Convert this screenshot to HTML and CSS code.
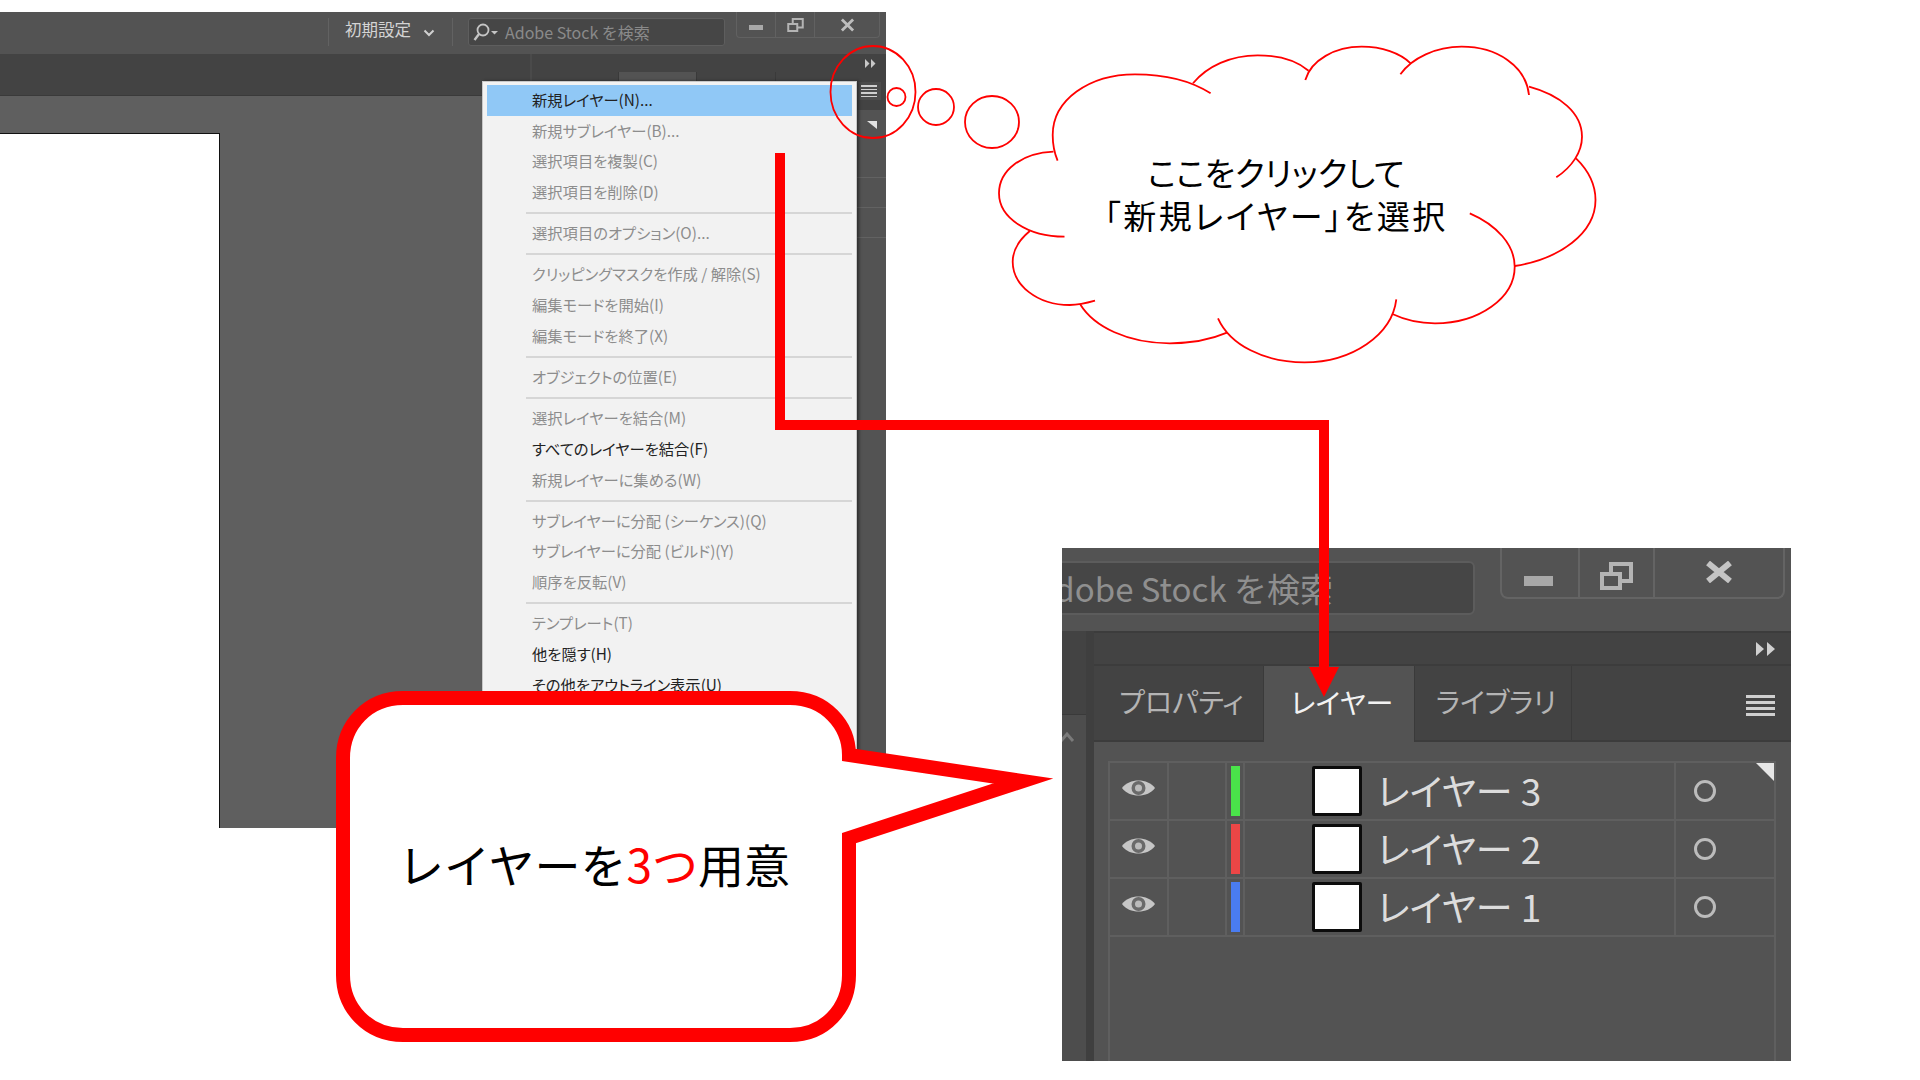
FILE: index.html
```html
<!DOCTYPE html>
<html lang="ja">
<head>
  <meta charset="UTF-8" />
  <title>レイヤーを3つ用意</title>
  <link rel="stylesheet" href="styles.css">
</head>
<body>
<div class="slide">

  <!-- ========== ILLUSTRATOR WINDOW ========== -->
  <section class="app app-main">
    <div class="titlebar">
      <span class="bar-sep"></span>
      <span class="workspace-name">初期設定</span>
      <svg class="chevron" width="12" height="8" viewBox="0 0 12 8"><path d="M1.500 1.500 6 6l4.500-4.500" fill="none" stroke="#d0d0d0" stroke-width="2"/></svg>
      <span class="bar-sep bar-sep-2"></span>
      <div class="search">
        <svg class="search-icon" width="25" height="20" viewBox="0 0 25 20"><circle cx="10" cy="8" r="5.500" fill="none" stroke="#c4c4c4" stroke-width="1.800"/><path d="M6 12 1.500 18" stroke="#c4c4c4" stroke-width="2.400"/><path d="M18 9h7l-3.500 3.500z" fill="#c4c4c4"/></svg>
        <span>Adobe Stock を検索</span>
      </div>
      <div class="win-controls">
        <span class="win-btn win-min"><svg width="14" height="5" viewBox="0 0 14 5"><rect width="14" height="5" fill="#a8a8a8"/></svg></span>
        <span class="win-btn win-max"><svg width="17" height="14" viewBox="0 0 33 28"><path d="M11 10V2h20v17h-9M2 12h18v14H2z" fill="none" stroke="#b4b4b4" stroke-width="4"/></svg></span>
        <span class="win-btn win-close"><svg width="15" height="14" viewBox="0 0 15 15"><path d="m1.500 1.500 12 12m0-12-12 12" stroke="#bdbdbd" stroke-width="3"/></svg></span>
      </div>
    </div>

    <div class="workspace">
      <div class="doc">
        <div class="doc-tabs"></div>
        <div class="doc-canvas"><div class="artboard"></div></div>
      </div>
      <div class="dock">
        <div class="dock-bar">
          <svg width="11" height="9" viewBox="0 0 11 9"><path d="M0 0l4.500 4.500L0 9zM6 0l4.500 4.500L6 9z" fill="#c8c8c8"/></svg>
        </div>
        <div class="dock-tabs">
          <span class="dock-tab dock-tab-a"></span>
          <span class="dock-tab dock-tab-b"></span>
          <span class="dock-tab dock-tab-c"></span>
          <span class="dock-menu-btn"><i></i><i></i><i></i><i></i></span>
        </div>
        <div class="dock-rows">
          <span class="fold"></span>
          <div class="dock-row"></div>
          <div class="dock-row dock-row-b"></div>
          <div class="dock-row dock-row-b"></div>
        </div>
      </div>
    </div>

    <!-- panel flyout menu -->
    <div class="menu">
      <div class="menu-item menu-item-on">新規レイヤー(N)...</div>
      <div class="menu-item">新規サブレイヤー(B)...</div>
      <div class="menu-item">選択項目を複製(C)</div>
      <div class="menu-item">選択項目を削除(D)</div>
      <div class="menu-sep"></div>
      <div class="menu-item">選択項目のオプション(O)...</div>
      <div class="menu-sep"></div>
      <div class="menu-item">クリッピングマスクを作成 / 解除(S)</div>
      <div class="menu-item">編集モードを開始(I)</div>
      <div class="menu-item">編集モードを終了(X)</div>
      <div class="menu-sep"></div>
      <div class="menu-item">オブジェクトの位置(E)</div>
      <div class="menu-sep"></div>
      <div class="menu-item">選択レイヤーを結合(M)</div>
      <div class="menu-item menu-item-dark">すべてのレイヤーを結合(F)</div>
      <div class="menu-item">新規レイヤーに集める(W)</div>
      <div class="menu-sep"></div>
      <div class="menu-item">サブレイヤーに分配 (シーケンス)(Q)</div>
      <div class="menu-item">サブレイヤーに分配 (ビルド)(Y)</div>
      <div class="menu-item">順序を反転(V)</div>
      <div class="menu-sep"></div>
      <div class="menu-item">テンプレート(T)</div>
      <div class="menu-item menu-item-dark">他を隠す(H)</div>
      <div class="menu-item menu-item-dark">その他をアウトライン表示(U)</div>
    </div>
  </section>

  <!-- ========== ENLARGED LAYERS PANEL ========== -->
  <section class="app app-crop">
    <div class="crop-title">
      <div class="crop-search"><span>Adobe Stock を検索</span></div>
      <div class="crop-controls">
        <span class="crop-btn crop-min"><svg width="29" height="10" viewBox="0 0 29 10"><rect width="29" height="10" fill="#a8a8a8"/></svg></span>
        <span class="crop-btn crop-max"><svg width="33" height="28" viewBox="0 0 33 28"><path d="M11 10V2h20v17h-9M2 12h18v14H2z" fill="none" stroke="#b4b4b4" stroke-width="4"/></svg></span>
        <span class="crop-btn crop-close"><svg width="28" height="22" viewBox="0 0 28 22"><path d="m3 2 22 18m0-18L3 20" stroke="#c4c4c4" stroke-width="6"/></svg></span>
      </div>
    </div>
    <div class="crop-body">
      <div class="crop-strip">
        <div class="crop-strip-top"></div>
        <svg class="crop-chevron" width="13" height="12" viewBox="0 0 13 12"><path d="M-1 10 5 3l6 7" fill="none" stroke="#7a7a7a" stroke-width="3"/></svg>
      </div>
      <div class="crop-panel">
        <div class="crop-bar">
          <svg width="20" height="14" viewBox="0 0 20 14"><path d="M0 0l8 7-8 7zM11 0l8 7-8 7z" fill="#d0d0d0"/></svg>
        </div>
        <div class="crop-tabs">
          <span class="crop-tab crop-tab-1">プロパティ</span>
          <span class="crop-tab crop-tab-2">レイヤー</span>
          <span class="crop-tab crop-tab-3">ライブラリ</span>
          <span class="crop-burger"><i></i><i></i><i></i><i></i></span>
        </div>
        <div class="layers">
          <span class="layers-fold"></span>
          <div class="layer">
            <span class="layer-eye"><svg width="35" height="24" viewBox="0 0 35 24"><path d="M1 12C8 2 27 2 34 12 27 22 8 22 1 12z" fill="#c6c6c6"/><circle cx="17.500" cy="12" r="7" fill="#6a6a6a"/><circle cx="17.500" cy="12" r="3.500" fill="#bbb"/></svg></span>
            <span class="layer-gap"></span>
            <span class="layer-color"><i class="swatch swatch-green"></i></span>
            <span class="layer-main"><i class="thumb"></i><span class="layer-name">レイヤー 3</span></span>
            <span class="layer-target"><i></i></span>
          </div>
          <div class="layer">
            <span class="layer-eye"><svg width="35" height="24" viewBox="0 0 35 24"><path d="M1 12C8 2 27 2 34 12 27 22 8 22 1 12z" fill="#c6c6c6"/><circle cx="17.500" cy="12" r="7" fill="#6a6a6a"/><circle cx="17.500" cy="12" r="3.500" fill="#bbb"/></svg></span>
            <span class="layer-gap"></span>
            <span class="layer-color"><i class="swatch swatch-red"></i></span>
            <span class="layer-main"><i class="thumb"></i><span class="layer-name">レイヤー 2</span></span>
            <span class="layer-target"><i></i></span>
          </div>
          <div class="layer">
            <span class="layer-eye"><svg width="35" height="24" viewBox="0 0 35 24"><path d="M1 12C8 2 27 2 34 12 27 22 8 22 1 12z" fill="#c6c6c6"/><circle cx="17.500" cy="12" r="7" fill="#6a6a6a"/><circle cx="17.500" cy="12" r="3.500" fill="#bbb"/></svg></span>
            <span class="layer-gap"></span>
            <span class="layer-color"><i class="swatch swatch-blue"></i></span>
            <span class="layer-main"><i class="thumb"></i><span class="layer-name">レイヤー 1</span></span>
            <span class="layer-target"><i></i></span>
          </div>
        </div>
      </div>
    </div>
  </section>

  <!-- ========== RED ANNOTATIONS ========== -->
  <svg class="notes" width="1920" height="1080" viewBox="0 0 1920 1080">
    <!-- connector + arrow -->
    <path d="M780 153V425H1324V670" fill="none" stroke="#f00" stroke-width="10"/>
    <path d="M1309 667h30l-15 30z" fill="#f00"/>

    <!-- thought bubble -->
    <g fill="none" stroke="#f00" stroke-width="1.800">
      <ellipse cx="873" cy="92" rx="42.500" ry="46"/>
      <ellipse cx="896.500" cy="97" rx="9" ry="9"/>
      <ellipse cx="936" cy="107" rx="18" ry="18"/>
      <ellipse cx="992" cy="122" rx="27" ry="26"/>
      <path d="M1057.600 160.700C1054 152 1052.700 143 1052.700 135 1052.700 100 1089 74.300 1135 74.300 1163 74.300 1190 80 1210.600 93.300"/>
      <path d="M1193 83.300C1207 66 1231 55.300 1257.600 55.300 1279 55.300 1297 61 1308.600 70.700"/>
      <path d="M1305.300 80C1311 60 1335 46.700 1361.600 46.700 1382 46.700 1400 53 1410.600 63.300"/>
      <path d="M1400.400 74.300C1412 58 1436 46.700 1461.600 46.700 1497 46.700 1526 66 1529 95"/>
      <path d="M1529 86.700C1560 95 1582 113 1582 136.700 1582 152 1572 167 1556.300 177.300"/>
      <path d="M1576 158.300C1588 170 1595.500 184 1595.500 200 1595.500 233 1560 259 1514.700 266"/>
      <path d="M1469.800 213.300C1497 225 1514.700 245 1514.700 266.700 1514.700 298 1479 323.300 1435 323.300 1419 323.300 1405 320 1393 314.300"/>
      <path d="M1396.300 299.300C1392 335 1352 362.300 1304.500 362.300 1264 362.300 1230 345 1218 318.300"/>
      <path d="M1227 332.700C1210 340 1190 343.300 1169.800 343.300 1128 343.300 1094 327 1080 304"/>
      <path d="M1095 300.700C1087 303 1078 305 1069.800 305 1037 305 1012.700 285 1012.700 261.700 1012.700 250 1019 240 1029.800 231"/>
      <path d="M1064.500 236.700C1028 236.700 999 218 999 193.300 999 170 1022 153 1053.500 151.700"/>
    </g>

    <!-- speech bubble -->
    <path d="M403 698H790C825 698 849 725 849 755L1023 781 849 838V975C849 1008 825 1035 790 1035H403C368 1035 343 1008 343 975V758C343 725 368 698 403 698Z"
          fill="#fff" stroke="#f00" stroke-width="14" stroke-miterlimit="10"/>
  </svg>

  <div class="note note-cloud">ここをクリックして<br><span class="cloud-wide">「新規レイヤー」を選択</span></div>
  <div class="note note-callout">レイヤーを<span class="hot">3つ</span>用意</div>

</div>
</body>
</html>
```

FILE: styles.css
```css
html, body { margin: 0; padding: 0; background: #fff; }
body { font-family: "Noto Sans CJK JP", "Noto Sans", sans-serif; }
i { display: block; }

/* free canvas: the slide holds two screenshots plus annotations */
.slide { position: relative; width: 1920px; height: 1080px; overflow: hidden; background: #fff; }
.app { position: absolute; overflow: hidden; display: flex; flex-direction: column; }
.app-main { left: 0; top: 12px; width: 886px; height: 816px; background: #5f5f5f; }
.app-crop { left: 1062px; top: 548px; width: 729px; height: 513px; background: #535353; }

/* ---------- MAIN TITLE BAR ---------- */
.titlebar { display: flex; height: 42px; flex: none; align-items: flex-start; padding-left: 328px; background: #535353; box-sizing: border-box; }
.bar-sep { width: 1px; height: 28px; margin-top: 6px; background: #626262; }
.bar-sep-2 { margin-left: 17px; }
.workspace-name { margin: 4px 0 0 16px; font-size: 16.500px; line-height: 26px; color: #d4d4d4; font-feature-settings: "palt"; }
.chevron { margin: 17px 0 0 12px; }
.search { display: flex; align-items: center; width: 257px; height: 28px; margin: 6px 0 0 15px; background: #464646; border: 1px solid #5e5e5e; border-radius: 3px; box-sizing: border-box; }
.search-icon { margin-left: 4px; }
.search span { margin-left: 7px; font-size: 16px; color: #8a8a8a; white-space: nowrap; }
.win-controls { display: flex; width: 144px; height: 26px; margin-left: 11px; border: 1px solid #616161; border-top: 0; border-radius: 0 0 4px 4px; box-sizing: border-box; }
.win-btn { display: flex; align-items: center; justify-content: center; border-right: 1px solid #616161; }
.win-min { width: 39px; padding-top: 6px; box-sizing: border-box; }
.win-max { width: 38px; }
.win-close { flex: 1; border-right: 0; }

/* ---------- MAIN WORK AREA ---------- */
.workspace { display: flex; flex: 1; }
.doc { display: flex; flex-direction: column; width: 530px; }
.doc-tabs { height: 42px; flex: none; background: #434343; border-bottom: 1px solid #3a3a3a; box-sizing: border-box; }
.doc-canvas { flex: 1; padding-top: 37px; background: #5f5f5f; }
.artboard { width: 220px; height: 695px; background: #fff; border-top: 1px solid #111; border-right: 1px solid #111; box-sizing: border-box; }

.dock { display: flex; flex: 1; flex-direction: column; background: #535353; border-left: 2px solid #4a4a4a; }
.dock-bar { display: flex; height: 18px; flex: none; align-items: center; justify-content: flex-end; padding-right: 10px; background: #434343; box-sizing: border-box; }
.dock-tabs { position: relative; display: flex; height: 38px; flex: none; background: #434343; }
.dock-tab { height: 100%; border-right: 1px solid #3a3a3a; }
.dock-tab-a { width: 86px; }
.dock-tab-b { width: 77px; background: #535353; }
.dock-tab-c { width: 78px; }
.dock-menu-btn { position: absolute; left: 325px; top: 10px; display: flex; flex-direction: column; gap: 2px; width: 24px; height: 18px; padding: 3px 4px; background: #4c4c4c; box-sizing: border-box; }
.dock-menu-btn i { height: 1.500px; background: #d0d0d0; }
.dock-rows { position: relative; padding: 39px 0 0 325px; }
.dock-row { height: 29px; border-bottom: 1px solid #626262; box-sizing: border-box; }
.dock-row-b { height: 30px; }
.fold { position: absolute; left: 335px; top: 11px; border-style: solid; border-width: 0 10px 8px 0; border-color: transparent #e2e2e2 transparent transparent; }

/* ---------- FLYOUT MENU ---------- */
.menu { position: absolute; left: 482px; top: 69px; width: 375px; padding: 3px 4px 70px; background: #f2f2f2; border: 1px solid #c8c8c8; box-shadow: 2px 0 3px rgba(0, 0, 0, .45); box-sizing: border-box; }
.menu-item { height: 30.700px; padding: 0 0 1px 45px; font-size: 15.300px; line-height: 29px; color: #8d8d8d; white-space: nowrap; font-feature-settings: "palt"; box-sizing: border-box; }
.menu-item-on { color: #222; background: #90c8f6; }
.menu-item-dark { color: #222; }
.menu-sep { height: 10.500px; margin-left: 39px; background: linear-gradient(#d6d6d6, #d6d6d6) center / 100% 2px no-repeat; }

/* ---------- ENLARGED PANEL ---------- */
.crop-title { display: flex; height: 83px; flex: none; align-items: flex-start; }
.crop-search { display: flex; flex: none; align-items: center; justify-content: flex-end; width: 513px; height: 54px; margin: 13px 0 0 -100px; padding-right: 140px; background: #464646; border: 2px solid #5c5c5c; border-radius: 6px; box-sizing: border-box; }
.crop-search span { font-size: 33px; color: #8f8f8f; white-space: nowrap; }
.crop-controls { display: flex; width: 285px; height: 51px; margin-left: 25px; border: 2px solid #646464; border-top: 0; border-radius: 0 0 8px 8px; box-sizing: border-box; }
.crop-btn { display: flex; align-items: center; justify-content: center; border-right: 2px solid #646464; box-sizing: border-box; }
.crop-min { width: 78px; padding: 17px 3px 0 0; }
.crop-max { width: 75px; padding-top: 6px; }
.crop-close { flex: 1; border-right: 0; padding-bottom: 2px; }

.crop-body { display: flex; flex: 1; min-height: 0; }
.crop-strip { position: relative; width: 24px; flex: none; background: #4d4d4d; border-right: 8px solid #3f3f3f; }
.crop-strip-top { height: 83px; background: #434343; border-bottom: 1px solid #3a3a3a; }
.crop-chevron { position: absolute; left: 0; top: 100px; }
.crop-panel { display: flex; flex: 1; flex-direction: column; min-width: 0; }
.crop-bar { display: flex; height: 35px; flex: none; align-items: center; justify-content: flex-end; padding-right: 15px; background: #434343; border-top: 2px solid #3c3c3c; border-bottom: 2px solid #3c3c3c; box-sizing: border-box; }
.crop-tabs { position: relative; display: flex; height: 76px; flex: none; background: #434343; border-bottom: 2px solid #3c3c3c; box-sizing: border-box; }
.crop-tab { display: flex; height: 100%; align-items: center; justify-content: center; padding: 0 0 4px 6px; font-size: 28px; color: #b4b4b4; border-right: 1px solid #3a3a3a; font-feature-settings: "palt"; box-sizing: border-box; white-space: nowrap; }
.crop-tab-1 { width: 170px; }
.crop-tab-2 { width: 151px; height: 76px; color: #f2f2f2; background: #535353; }
.crop-tab-3 { width: 157px; }
.crop-burger { position: absolute; left: 652px; top: 29px; display: flex; flex-direction: column; gap: 3px; width: 29px; }
.crop-burger i { height: 3px; background: #cfcfcf; }

.layers { position: relative; flex: 1; margin: 19px 15px 0 14px; border: 2px solid #5f5f5f; border-bottom: 0; }
.layers-fold { position: absolute; right: 0; top: 0; border-style: solid; border-width: 0 18px 18px 0; border-color: transparent #e6e6e6 transparent transparent; }
.layer { display: flex; height: 58px; border-bottom: 2px solid #5f5f5f; box-sizing: border-box; }
.layer > span { display: flex; flex: none; align-items: center; box-sizing: border-box; }
.layer-eye { width: 59px; justify-content: center; padding-bottom: 6px; border-right: 2px solid #5f5f5f; }
.layer-gap { width: 58px; border-right: 2px solid #5f5f5f; }
.layer-color { width: 18px; justify-content: center; border-right: 2px solid #5f5f5f; }
.swatch { width: 9px; height: 50px; }
.swatch-green { background: #4ae34a; }
.swatch-red { background: #ec4646; }
.swatch-blue { background: #4a7cf0; }
.layer-main { width: 431px; padding-left: 67px; border-right: 2px solid #5f5f5f; }
.thumb { width: 50px; height: 50px; background: #fff; border: 3px solid #0c0c0c; border-radius: 2px; box-sizing: border-box; }
.layer-name { margin: 0 0 2px 15px; font-size: 37px; color: #dcdcdc; white-space: nowrap; font-feature-settings: "palt"; }
.layer-target { flex: 1 !important; padding-left: 18px; }
.layer-target i { width: 22px; height: 22px; border: 3px solid #bcbcbc; border-radius: 50%; box-sizing: border-box; }

/* ---------- ANNOTATIONS ---------- */
.notes { position: absolute; left: 0; top: 0; }
.note { position: absolute; color: #000; white-space: nowrap; text-align: center; }
.note-cloud { left: 1076px; top: 151px; width: 400px; font-size: 33px; line-height: 43px; font-feature-settings: "palt"; }
.cloud-wide { letter-spacing: 2.500px; }
.note-callout { left: 341px; top: 828px; width: 506px; font-size: 46px; line-height: 70px; }
.hot { color: #f00; }
```
